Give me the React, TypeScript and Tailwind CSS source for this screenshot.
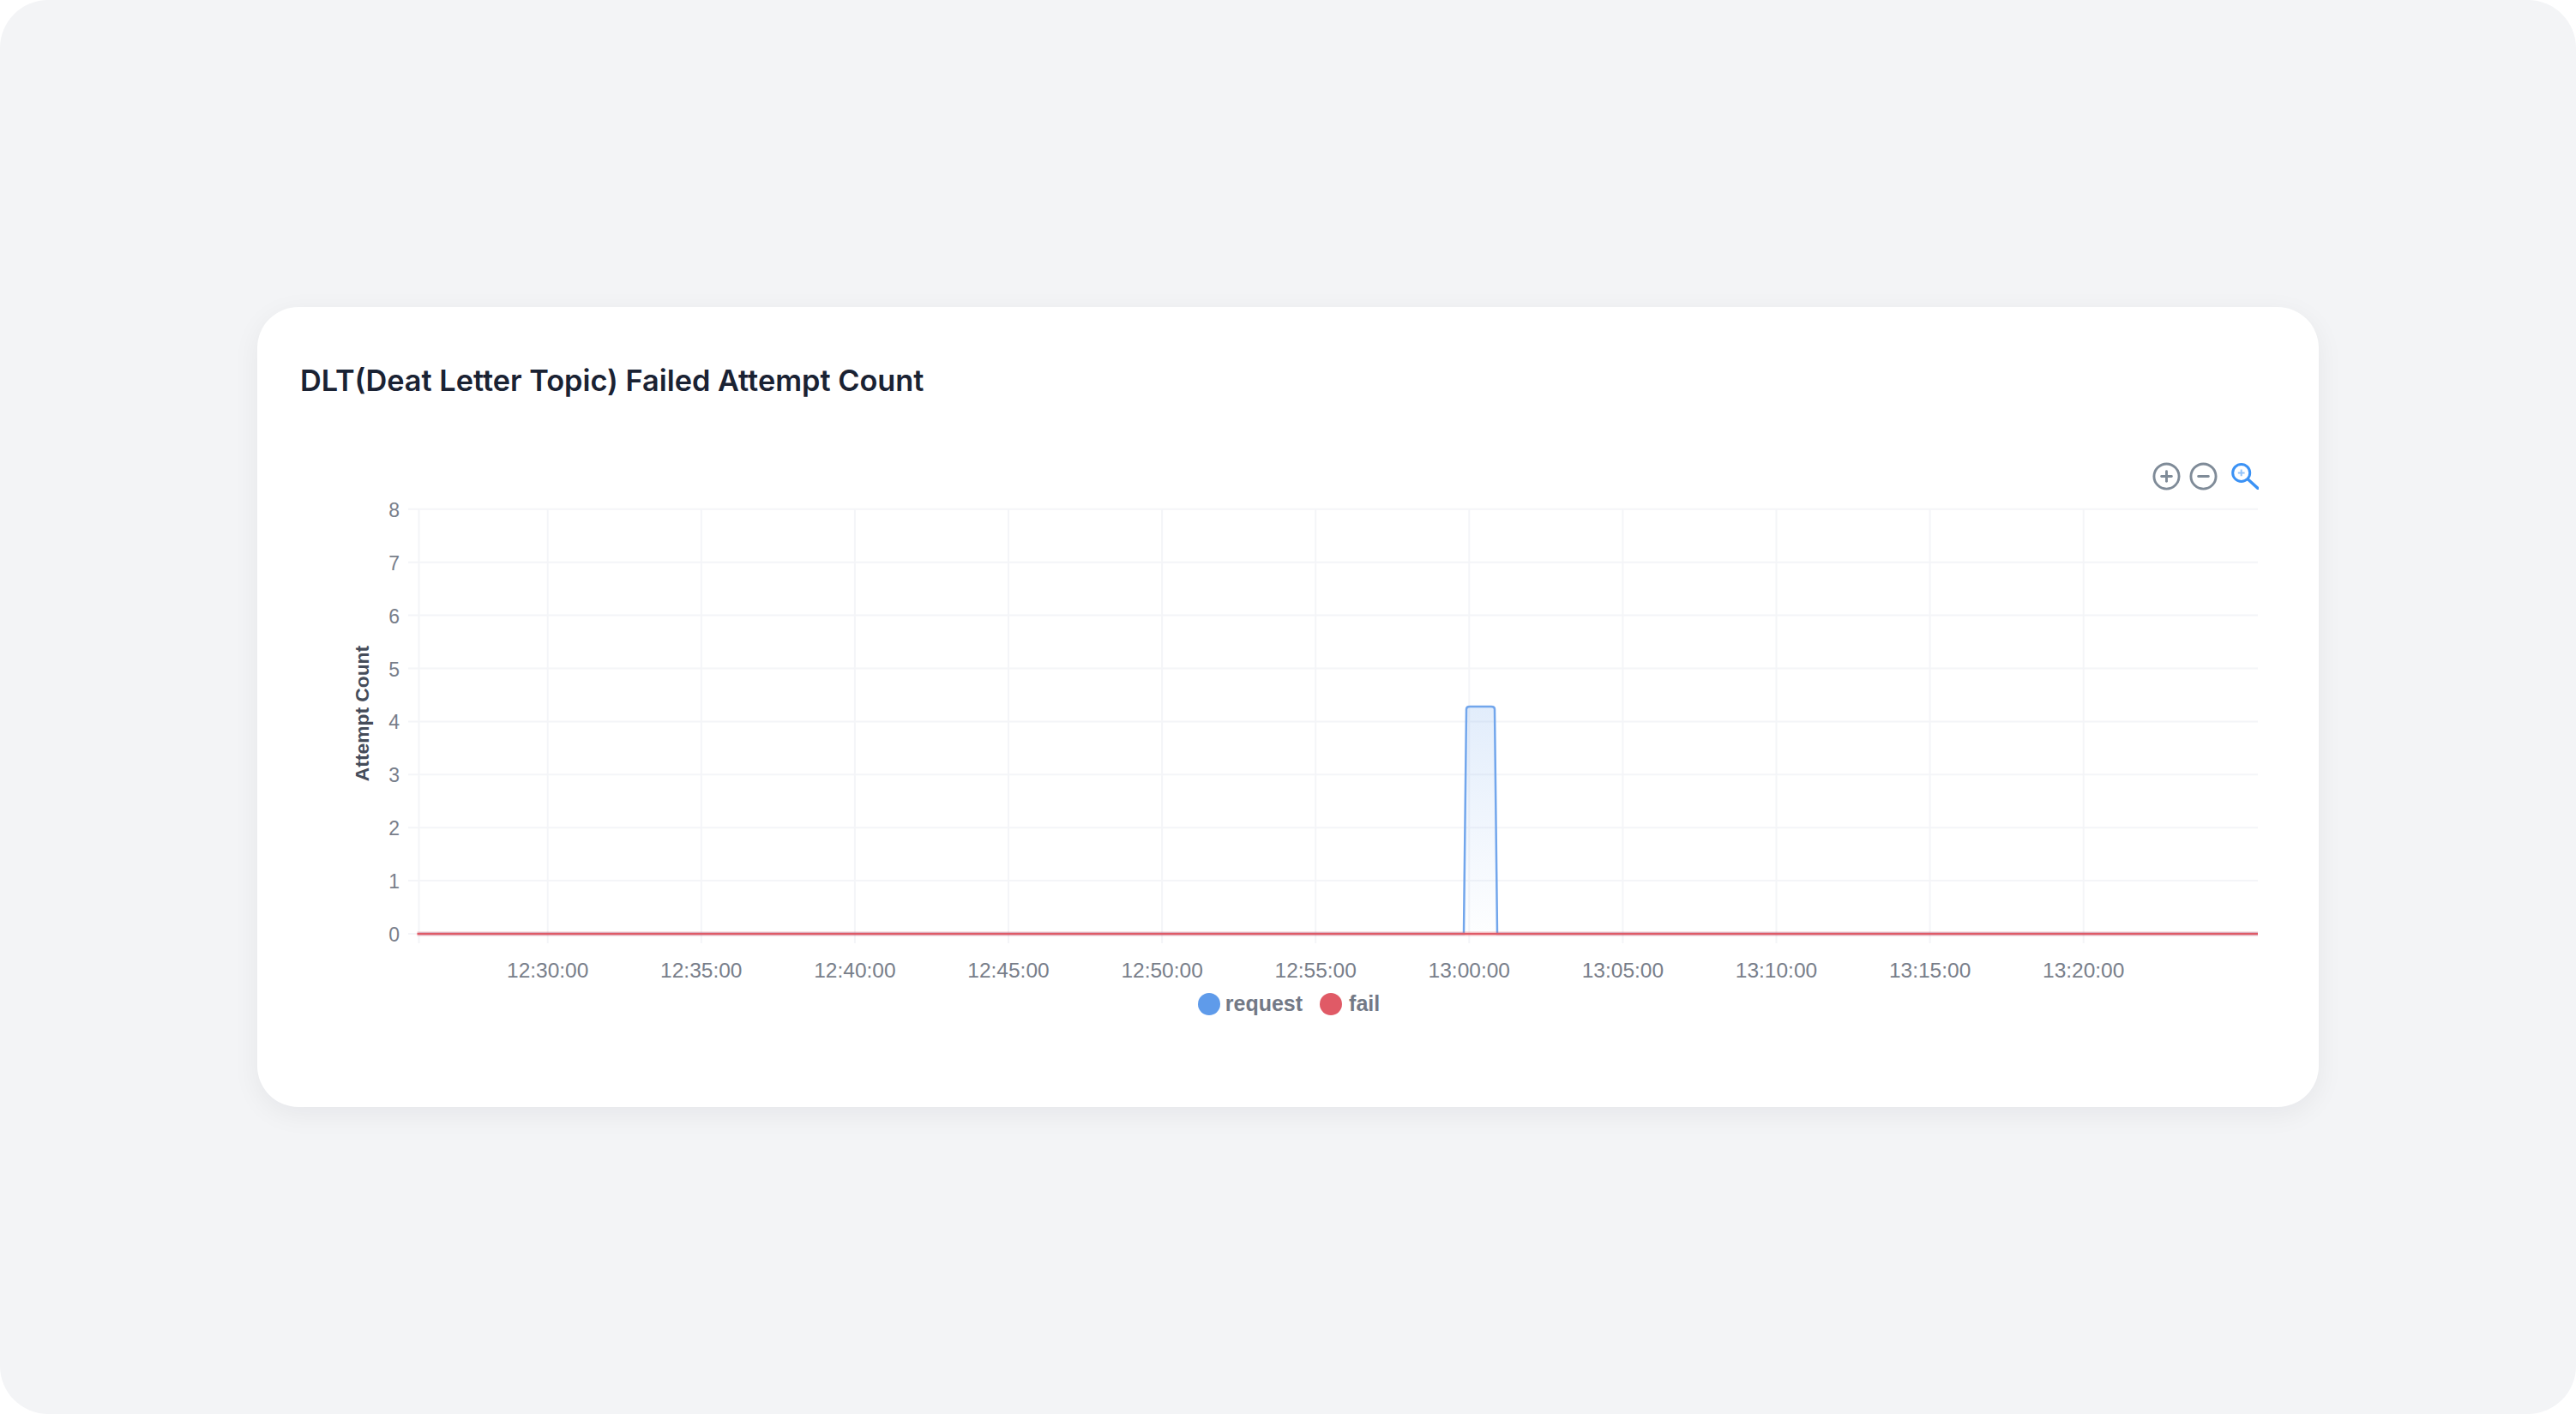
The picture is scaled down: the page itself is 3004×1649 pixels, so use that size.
import { CirclePlus, CircleMinus } from "lucide-react";

// chart scale, in page pixels (the svg viewBox uses the same numbers)
const Y_ZERO = 1089;
const Y_STEP = 61.9;
const X_FIRST = 638.7;
const X_STEP = 179.1;
const X_LEFT = 488.5;
const X_RIGHT = 2633;

const yTicks = [0, 1, 2, 3, 4, 5, 6, 7, 8];
const xTicks = [
  "12:30:00",
  "12:35:00",
  "12:40:00",
  "12:45:00",
  "12:50:00",
  "12:55:00",
  "13:00:00",
  "13:05:00",
  "13:10:00",
  "13:15:00",
  "13:20:00",
];

function AttemptChart() {
  return (
    <svg viewBox="350 570 2304 580" className="block h-[580px] w-[2304px]">
      <defs>
        <linearGradient id="requestFill" x1="0" y1="0" x2="0" y2="1">
          <stop offset="0%" stopColor="#5f9bea" stopOpacity="0.18" />
          <stop offset="100%" stopColor="#5f9bea" stopOpacity="0.01" />
        </linearGradient>
      </defs>

      {yTicks.map((t) => (
        <line key={t} x1={476} x2={X_RIGHT} y1={Y_ZERO - t * Y_STEP} y2={Y_ZERO - t * Y_STEP} stroke="#f4f5f8" strokeWidth="2" />
      ))}
      <line x1={X_LEFT} x2={X_LEFT} y1={594} y2={1100} stroke="#f4f5f8" strokeWidth="2" />
      {xTicks.map((label, i) => (
        <line key={label} x1={X_FIRST + i * X_STEP} x2={X_FIRST + i * X_STEP} y1={594} y2={1100} stroke="#f4f5f8" strokeWidth="2" />
      ))}

      {yTicks.map((t) => (
        <text key={t} x={466} y={Y_ZERO - t * Y_STEP + 9} textAnchor="end" fontSize="23" fill="#787e8a" fontFamily="'Liberation Sans', sans-serif">
          {t}
        </text>
      ))}
      {xTicks.map((label, i) => (
        <text key={label} x={X_FIRST + i * X_STEP} y={1140} textAnchor="middle" fontSize="24.5" fill="#787e8a" fontFamily="'Liberation Sans', sans-serif">
          {label}
        </text>
      ))}
      <text
        transform="translate(430 832) rotate(-90)"
        textAnchor="middle"
        fontSize="22.8"
        fontWeight="700"
        fill="#454c59"
        fontFamily="'Liberation Sans', sans-serif"
      >
        Attempt Count
      </text>

      {/* request series, flat at zero apart from the one spike */}
      <path d="M1707 1089 L1710 827 Q1710 824 1714 824 L1739 824 Q1743 824 1743 827 L1746 1089 Z" fill="url(#requestFill)" />
      <path
        d={`M${X_LEFT} ${Y_ZERO} L1707 ${Y_ZERO} L1710 827 Q1710 824 1714 824 L1739 824 Q1743 824 1743 827 L1746 ${Y_ZERO} L${X_RIGHT} ${Y_ZERO}`}
        fill="none"
        stroke="#72a6ec"
        strokeWidth="2.5"
      />
      {/* fail series */}
      <line x1={X_LEFT - 2} x2={X_RIGHT} y1={Y_ZERO} y2={Y_ZERO} stroke="#e05a66" strokeOpacity="0.18" strokeWidth="6" />
      <line x1={X_LEFT - 2} x2={X_RIGHT} y1={Y_ZERO} y2={Y_ZERO} stroke="#e05a66" strokeWidth="2.5" />
    </svg>
  );
}

// the magnifier handle runs longer than lucide's ZoomIn, so it is drawn by hand
function ZoomToolIcon() {
  return (
    <svg viewBox="0 0 34 32" className="h-[32px] w-[34px]" fill="none" stroke="#3b92f5">
      <circle cx="13.7" cy="12.4" r="10" strokeWidth="3" />
      <path d="M21.5 20 L33 30.5" strokeWidth="3.4" strokeLinecap="round" />
      <path d="M13.7 8.5 V16.3 M9.8 12.4 H17.6" strokeWidth="2" strokeOpacity="0.55" />
    </svg>
  );
}

export default function App() {
  return (
    <div className="h-[1649px] w-full bg-white">
      <div className="flex h-full w-full items-center justify-center rounded-[56px] bg-[#f3f4f6]">
        <div className="h-[933px] w-[2404px] rounded-[48px] bg-white px-[50px] pt-[66px] shadow-[0_8px_32px_rgba(17,24,39,0.06)]">
          <h2 className="font-['Inter',sans-serif] text-[34.3px] leading-[40px] font-semibold text-[#1a2233]">
            DLT(Deat Letter Topic) Failed Attempt Count
          </h2>

          <div className="mt-[76px] flex h-[30px] w-[2304px] items-center justify-end pr-[20px]">
            <CirclePlus className="h-[35px] w-[35px] text-[#7f8b98]" strokeWidth={2} />
            <CircleMinus className="ml-[7.5px] h-[35px] w-[35px] text-[#7f8b98]" strokeWidth={2} />
            <span className="ml-[13.5px]">
              <ZoomToolIcon />
            </span>
          </div>

          <AttemptChart />

          <div className="mt-[7px] flex h-[28px] items-center justify-center gap-[20px] pl-[2px] font-['Liberation_Sans',sans-serif] text-[25px] font-bold text-[#737986]">
            <div className="flex items-center gap-[6px]">
              <span className="h-[26px] w-[26px] rounded-full bg-[#5f9bea]" />
              <span>request</span>
            </div>
            <div className="flex items-center gap-[8px]">
              <span className="h-[26px] w-[26px] rounded-full bg-[#e05a66]" />
              <span>fail</span>
            </div>
          </div>
        </div>
      </div>
    </div>
  );
}
